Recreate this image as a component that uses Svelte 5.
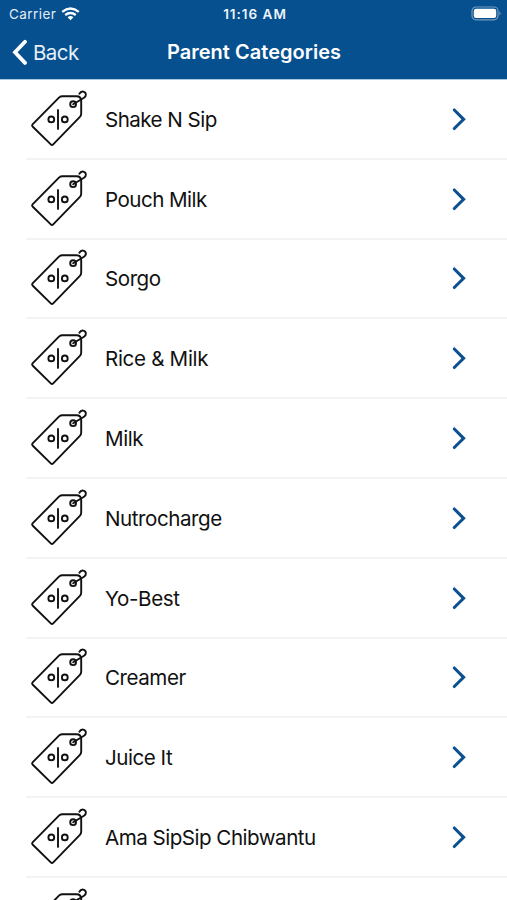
<script>
  const categories = [
    { name: 'Shake N Sip', width: 111 },
    { name: 'Pouch Milk', width: 101 },
    { name: 'Sorgo', width: 55 },
    { name: 'Rice & Milk', width: 102.5 },
    { name: 'Milk', width: 37.5 },
    { name: 'Nutrocharge', width: 116 },
    { name: 'Yo-Best', width: 74 },
    { name: 'Creamer', width: 80 },
    { name: 'Juice It', width: 66.5 },
    { name: 'Ama SipSip Chibwantu', width: 210 },
    { name: '', width: 0 }
  ];

  function fit(node, width) {
    const apply = () => {
      node.style.letterSpacing = '0px';
      const natural = node.getBoundingClientRect().width;
      const count = node.textContent.length;
      if (width && count) node.style.letterSpacing = `${(width + 0.7 - natural) / count}px`;
    };
    apply();
    document.fonts.ready.then(apply);
  }
</script>

<main>
  <header>
    <div class="status">
      <div class="carrier">
        <span use:fit={46.5}>Carrier</span>
        <svg width="19" height="14" viewBox="0 0 19 14" fill="none" stroke="#fff" stroke-width="2.3">
          <path d="M1.2 4.8Q9.5-1.9 17.8 4.8" />
          <path d="M4.2 8Q9.5 3.9 14.8 8" />
          <path d="M6.6 10.2Q9.5 7.9 12.4 10.2L9.5 13.2Z" fill="#fff" stroke="none" />
        </svg>
      </div>
      <strong><span use:fit={63}>11:16 AM</span></strong>
      <svg class="battery" width="30" height="15" viewBox="0 0 30 15">
        <rect x="1" y="1" width="26" height="12.8" rx="4" fill="none" stroke="#739bbd" stroke-width="1.2" />
        <rect x="2.8" y="2.8" width="22.4" height="9.2" rx="2.2" fill="#fff" />
        <path d="M28.3 5.2Q30.8 7.4 28.3 9.6Z" fill="#739bbd" />
      </svg>
    </div>
    <nav>
      <div class="back">
        <svg width="16" height="27" viewBox="0 0 16 27" fill="none" stroke="#fff" stroke-width="3.8" stroke-linecap="round" stroke-linejoin="miter">
          <path d="M14 2.8L4 13.3L14 23.9" />
        </svg>
        <span use:fit={45}>Back</span>
      </div>
      <h1><span use:fit={173.5}>Parent Categories</span></h1>
      <div></div>
    </nav>
  </header>

  <ul>
    {#each categories as category}
      <li>
        <svg class="tag" width="64" height="78" viewBox="0 0 64 78" fill="none" stroke="#111" stroke-width="1.9" stroke-linecap="round" stroke-linejoin="round">
          <path d="M33.2 18.4Q34.6 17.2 36.5 17.2H50.5Q55.2 17.2 55.2 22V34.8Q55.2 36.6 53.9 37.9L27.2 65.4Q26 66.6 24.8 65.4L6.8 47.7Q5.5 46.5 6.8 45.2Z" />
          <circle cx="47.1" cy="25.2" r="2.9" />
          <path d="M47.2 25.2L58 18.7C60.7 17 60.5 13.3 57.3 12.6Q54.7 12.2 53.4 14.7" />
          <circle cx="25.3" cy="40.4" r="2.9" />
          <circle cx="38.8" cy="40.4" r="2.9" />
          <path d="M32 31V49.9" />
        </svg>
        <div class="label"><span use:fit={category.width}>{category.name}</span></div>
        <svg class="chevron" width="16" height="24" viewBox="0 0 16 24" fill="none" stroke="#0b5190" stroke-width="3.1" stroke-linecap="round">
          <path d="M3.3 3L12.6 12.3L3.3 21.5" />
        </svg>
      </li>
    {/each}
  </ul>
</main>

<style>
  :global(body) { margin: 0; background: #fff; }
  main {
    height: 900px;
    overflow: hidden;
    display: flex;
    flex-direction: column;
    background: #fff;
    font-family: Inter, "Liberation Sans", sans-serif;
    color: #111;
  }
  svg { display: block; flex: none; }
  span { display: inline-block; white-space: nowrap; }
  header {
    box-sizing: border-box;
    flex: none;
    height: 80px;
    border-bottom: 1px solid #a9c8de;
    background: #06508f;
    background-clip: padding-box;
    color: #fff;
  }
  .status {
    height: 27px;
    display: grid;
    grid-template-columns: 1fr auto 1fr;
    align-items: center;
    padding: 0 6px 0 9px;
    font-size: 13.5px;
  }
  .carrier { display: flex; align-items: center; gap: 5px; color: #e3edf6; }
  .status strong { font-weight: 600; color: #edf4fa; }
  .battery { justify-self: end; }
  nav {
    height: 50px;
    display: grid;
    grid-template-columns: 1fr auto 1fr;
    align-items: center;
    padding: 0 11px;
    font-size: 20.5px;
  }
  .back { display: flex; align-items: center; gap: 6px; color: #e5eff8; }
  h1 { margin: 0; font-size: 20px; font-weight: 600; }
  h1 span { margin-left: 1px; }
  ul {
    flex: none;
    margin: 0;
    padding: 0 0 0 26px;
    list-style: none;
  }
  li {
    box-sizing: border-box;
    height: 79.8px;
    display: flex;
    align-items: center;
    border-bottom: 2px solid #f3f3f3;
    padding-right: 40px;
  }
  .tag { margin-top: -2px; }
  .label { flex: 1; padding-left: 15px; padding-top: 1px; font-size: 20.6px; }
</style>
